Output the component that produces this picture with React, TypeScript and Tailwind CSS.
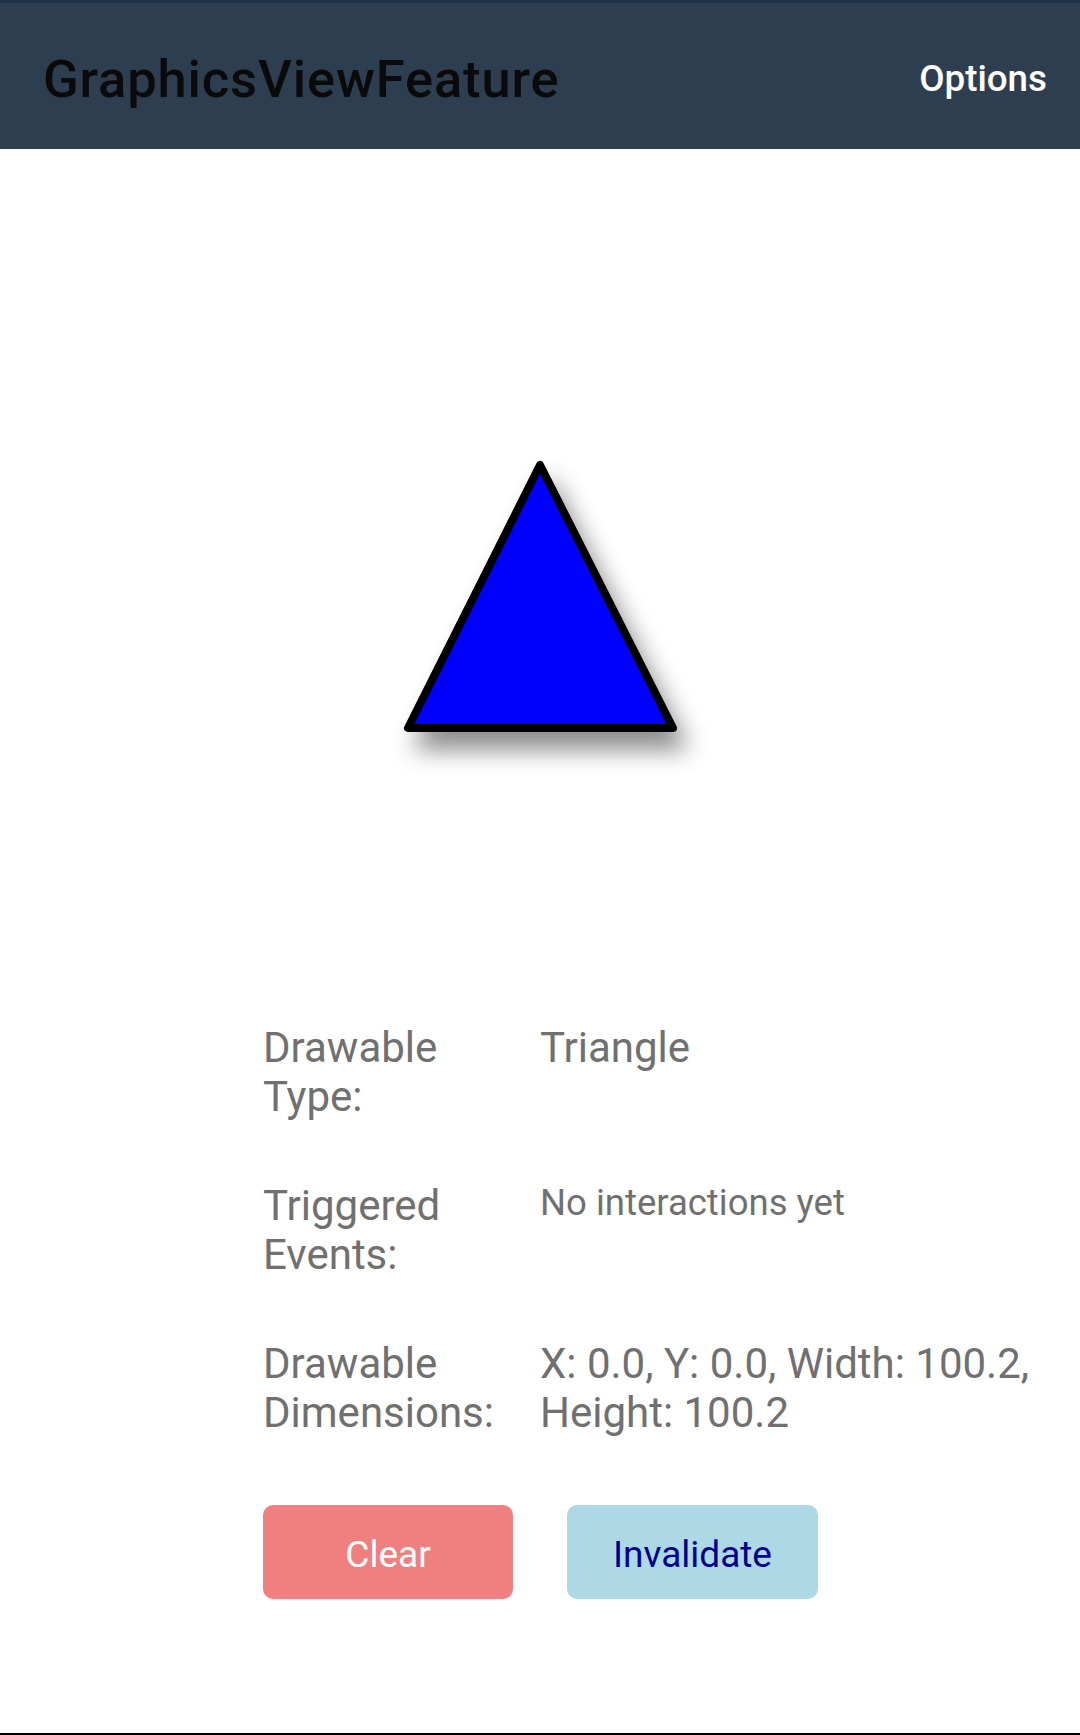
const rows = [
  { label: ['Drawable', 'Type:'], value: 'Triangle', small: false },
  { label: ['Triggered', 'Events:'], value: 'No interactions yet', small: true },
  { label: ['Drawable', 'Dimensions:'], value: 'X: 0.0, Y: 0.0, Width: 100.2, Height: 100.2', small: false },
]

function TriangleCanvas() {
  return (
    <svg width="1080" height="874" viewBox="0 0 1080 874" className="block">
      <defs>
        <filter id="shadow" x="-40%" y="-40%" width="180%" height="180%">
          <feDropShadow dx="10" dy="18" stdDeviation="12" floodColor="#000000" floodOpacity="0.45" />
        </filter>
      </defs>
      <polygon
        points="540,316 408,579 673,579"
        fill="#0000ff"
        stroke="#000000"
        strokeWidth="8"
        strokeLinejoin="round"
        filter="url(#shadow)"
      />
    </svg>
  )
}

export default function App() {
  return (
    <main
      className="flex h-[1735px] w-[1080px] flex-col bg-white"
      style={{ fontFamily: "Roboto, 'Noto Sans', sans-serif" }}
    >
      <header className="flex h-[149px] items-center justify-between border-t-[3px] border-[#1f3247] bg-[#2d3e50] pl-[43px] pr-[33px] pt-[6px]">
        <h1 className="text-[52.5px] font-medium tracking-[0.85px] text-[#0a0a0a]">GraphicsViewFeature</h1>
        <span className="text-[36.75px] font-medium text-white">Options</span>
      </header>

      <TriangleCanvas />

      <section className="grid grid-cols-[277px_510px] gap-y-[60px] pl-[263px] text-[#707070]">
        {rows.map((row) => (
          <div key={row.label.join(' ')} className="contents">
            <div className="text-[42px] leading-[49px]">
              {row.label[0]}
              <br />
              {row.label[1]}
            </div>
            <div className={row.small ? 'text-[36.5px] leading-[43px]' : 'text-[42px] leading-[49px]'}>
              {row.value}
            </div>
          </div>
        ))}
      </section>

      <div className="mt-[68px] flex gap-[54px] pl-[263px]">
        <button className="h-[94px] w-[250px] rounded-[10px] bg-[#f08080] pt-[6px] text-[37px] text-white">Clear</button>
        <button className="h-[94px] w-[251px] rounded-[10px] bg-[#add8e6] pt-[6px] text-[37px] text-[#00008b]">Invalidate</button>
      </div>

      <div className="flex-1" />
      <div className="h-[2px] bg-black" />
    </main>
  )
}
